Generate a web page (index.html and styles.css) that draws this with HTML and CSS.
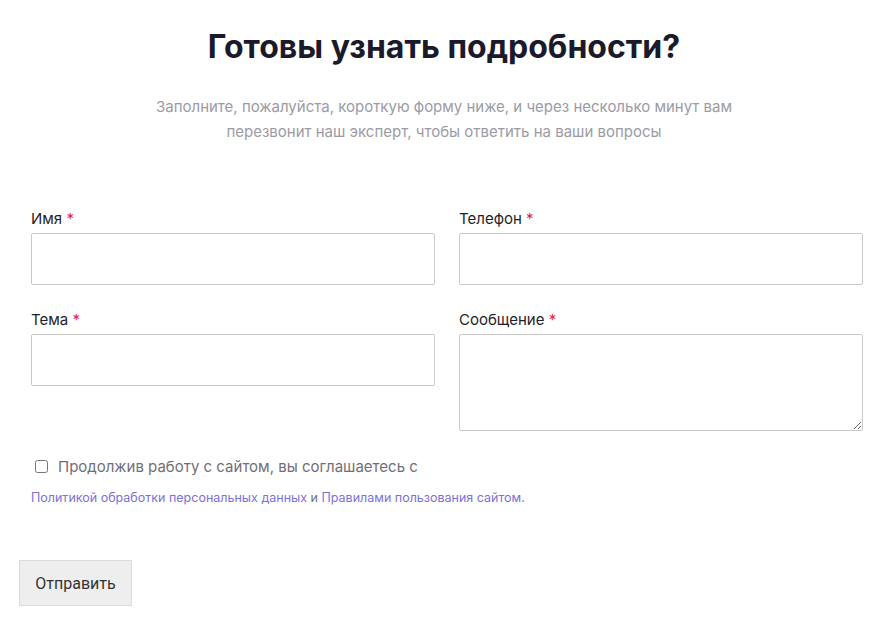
FILE: index.html
```html
<!DOCTYPE html>
<html lang="ru">

<head>
    <meta charset="utf-8">
    <title>Готовы узнать подробности?</title>
    <link rel="stylesheet" href="styles.css">
</head>

<body>
    <section class="contact">
        <h2 class="contact-title">Готовы узнать подробности?</h2>
        <p class="contact-lead">
            Заполните, пожалуйста, короткую форму ниже, и через несколько минут вам
            перезвонит наш эксперт, чтобы ответить на ваши вопросы
        </p>

        <form class="contact-form">
            <div class="fields">
                <div class="field">
                    <label for="name">Имя <span class="req">*</span></label>
                    <input type="text" id="name">
                </div>
                <div class="field">
                    <label for="phone">Телефон <span class="req">*</span></label>
                    <input type="tel" id="phone">
                </div>
                <div class="field">
                    <label for="topic">Тема <span class="req">*</span></label>
                    <input type="text" id="topic">
                </div>
                <div class="field">
                    <label for="message">Сообщение <span class="req">*</span></label>
                    <textarea id="message"></textarea>
                </div>
            </div>

            <label class="agree">
                <input type="checkbox">
                <span>Продолжив работу с сайтом, вы соглашаетесь с</span>
            </label>
            <p class="policy">
                <a href="#">Политикой обработки персональных данных</a> и
                <a href="#">Правилами пользования сайтом.</a>
            </p>

            <button type="submit" class="submit">Отправить</button>
        </form>
    </section>
</body>

</html>
```

FILE: styles.css
```css
body {
    margin: 0;
    background-color: #fff;
    font-family: Inter, "Noto Sans", sans-serif;
}

.contact {
    width: 888px;
    padding-top: 27px;
}

.contact-title {
    margin: 0;
    text-align: center;
    font-size: 32px;
    font-weight: 700;
    line-height: 40px;
    color: #1b1a2b;
}

.contact-lead {
    width: 600px;
    margin: 27px auto 0;
    text-align: center;
    font-size: 15px;
    line-height: 25px;
    color: #9b9ba5;
}

.contact-form {
    margin-top: 65px;
}

.fields {
    display: grid;
    grid-template-columns: 404px 404px;
    column-gap: 24px;
    row-gap: 25px;
    padding-left: 31px;
}

.field label {
    display: block;
    margin-bottom: 4px;
    font-size: 15px;
    line-height: 20px;
    font-weight: 400;
    color: #1f1e2a;
}

.req {
    color: #e5243b;
}

.field input,
.field textarea {
    display: block;
    box-sizing: border-box;
    width: 100%;
    height: 52px;
    margin: 0;
    border: 1px solid #c9c9c9;
    border-radius: 2px;
    background-color: #fff;
    font-family: inherit;
    font-size: 15px;
}

.field textarea {
    height: 97px;
    resize: vertical;
}

.agree {
    display: flex;
    align-items: center;
    gap: 10px;
    margin: 26px 0 0 35px;
    font-size: 15px;
    color: #6f6f77;
}

.agree input {
    width: 13px;
    height: 13px;
    margin: 0;
}

.policy {
    margin: 14px 0 0 31px;
    font-size: 12.5px;
    line-height: 16px;
    color: #6f6f77;
}

.policy a {
    color: #7c71d8;
    text-decoration: none;
}

.submit {
    display: block;
    margin: 54px 0 0 19px;
    width: 113px;
    height: 46px;
    border: 1px solid #dcdcdc;
    background-color: #eeeeee;
    font-family: Roboto, "Liberation Sans", sans-serif;
    font-size: 16px;
    color: #333;
    cursor: pointer;
}
```
